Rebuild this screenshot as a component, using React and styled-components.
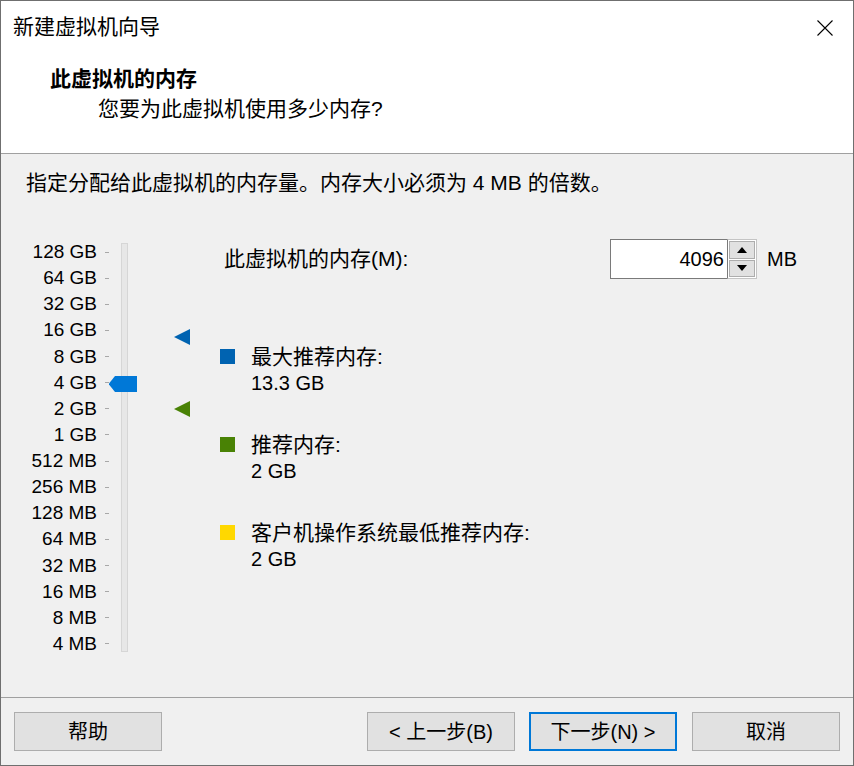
import React from 'react';
import styled, { createGlobalStyle } from 'styled-components';

const GlobalStyle = createGlobalStyle`
  html, body {
    margin: 0;
    padding: 0;
    background: #f0f0f0;
  }
  * { box-sizing: border-box; }
`;

const FONT = `"Liberation Sans", "Noto Sans CJK SC", sans-serif`;

// slider geometry
const ROW_H = 26.125;
const TRACK_TOP = 4;
const SCALE = ['128 GB', '64 GB', '32 GB', '16 GB', '8 GB', '4 GB', '2 GB', '1 GB',
  '512 MB', '256 MB', '128 MB', '64 MB', '32 MB', '16 MB', '8 MB', '4 MB'];

const posOf = gb => ROW_H / 2 + Math.log2(128 / gb) * ROW_H;

const Window = styled.div`
  width: 854px;
  height: 766px;
  border: 1px solid #6f6f6f;
  display: flex;
  flex-direction: column;
  font-family: ${FONT};
  color: #000;
  background: #f0f0f0;
`;

const Header = styled.div`
  height: 153px;
  background: #fff;
  border-bottom: 1px solid #a0a0a0;
  display: flex;
  flex-direction: column;
`;

const TitleRow = styled.div`
  height: 52px;
  display: flex;
  align-items: center;
  justify-content: space-between;
  padding: 0 20px 0 12px;
`;

const Title = styled.div`
  font-size: 21px;
  line-height: 26px;
`;

const CloseButton = styled.div`
  width: 16px;
  height: 16px;
  display: flex;
  margin-top: 1px;
`;

const Heading = styled.div`
  margin-top: 13px;
  padding-left: 49px;
  font-size: 21px;
  font-weight: bold;
  line-height: 26px;
`;

const Subheading = styled.div`
  margin-top: 4px;
  padding-left: 97px;
  font-size: 21px;
  line-height: 26px;
`;

const Body = styled.div`
  flex: 1;
  border-bottom: 1px solid #a0a0a0;
  padding-top: 17px;
`;

const Hint = styled.div`
  padding-left: 25px;
  font-size: 21px;
  line-height: 24px;
`;

const Main = styled.div`
  margin-top: 44px;
  display: flex;
`;

const Scale = styled.div`
  width: 219px;
  height: 418px;
  display: flex;
  flex-shrink: 0;
`;

const Labels = styled.div`
  display: flex;
  flex-direction: column;
`;

const ScaleRow = styled.div`
  height: ${ROW_H}px;
  display: flex;
  align-items: center;
`;

const ScaleLabel = styled.span`
  width: 96px;
  text-align: right;
  font-size: 19px;
  line-height: 22px;
`;

const Tick = styled.span`
  width: 4px;
  height: 1px;
  margin-left: 8px;
  background: #a8a8a8;
`;

const TrackColumn = styled.div`
  position: relative;
  margin-left: 12px;
  margin-top: ${TRACK_TOP}px;
  width: 7px;
  height: 409px;
  background: #e7e7e7;
  border: 1px solid #d6d6d6;
`;

const Thumb = styled.svg`
  position: absolute;
  left: -13px;
  width: 28px;
  height: 16px;
`;

const MarkerColumn = styled.div`
  position: relative;
  margin-left: 46px;
  width: 16px;
`;

const Marker = styled.svg`
  position: absolute;
  left: 0;
  width: 16px;
  height: 16px;
`;

const Details = styled.div`
  flex: 1;
  display: flex;
  flex-direction: column;
`;

const FieldRow = styled.div`
  display: flex;
  align-items: center;
  padding-left: 4px;
  height: 40px;
`;

const FieldLabel = styled.div`
  width: 386px;
  font-size: 21px;
  line-height: 24px;
`;

const SpinBox = styled.div`
  display: flex;
  height: 40px;
`;

const SpinInput = styled.div`
  width: 117px;
  height: 40px;
  border: 1px solid #7a7a7a;
  border-right: none;
  background: #fff;
  display: flex;
  align-items: center;
  justify-content: flex-end;
  padding-right: 3px;
  font-size: 20px;
`;

const Spinner = styled.div`
  width: 30px;
  height: 40px;
  border: 1px solid #c4c4c4;
  border-left: 1px solid #7a7a7a;
  background: #fff;
  display: flex;
  flex-direction: column;
  gap: 1px;
  padding: 1px;
`;

const SpinButton = styled.div`
  flex: 1;
  background: #e1e1e1;
  border: 1px solid #adadad;
  display: flex;
  align-items: center;
  justify-content: center;
`;

const Unit = styled.div`
  margin-left: 10px;
  font-size: 20px;
  line-height: 24px;
`;

const Legend = styled.div`
  margin-top: 64px;
  display: flex;
  flex-direction: column;
  gap: 34px;
`;

const LegendItem = styled.div`
  display: flex;
  gap: 16px;
`;

const Swatch = styled.span`
  width: 15px;
  height: 15px;
  margin-top: 6px;
  background: ${p => p.color};
`;

const LegendText = styled.div`
  display: flex;
  flex-direction: column;
`;

const LegendTitle = styled.div`
  font-size: 21px;
  line-height: 27px;
`;

const LegendValue = styled.div`
  font-size: 20px;
  line-height: 27px;
`;

const Footer = styled.div`
  height: 67px;
  display: flex;
  align-items: center;
  padding: 0 13px;
`;

const Spacer = styled.div`
  flex: 1;
`;

const Button = styled.div`
  width: 148px;
  height: 39px;
  background: #e1e1e1;
  border: ${p => p.primary ? '2px solid #0078d7' : '1px solid #adadad'};
  display: flex;
  align-items: center;
  justify-content: center;
  font-size: 20px;
  line-height: 24px;
  margin-left: ${p => p.gap || 0}px;
`;

const legend = [
  { color: '#0063b1', title: '最大推荐内存:', value: '13.3 GB' },
  { color: '#498205', title: '推荐内存:', value: '2 GB' },
  { color: '#ffd800', title: '客户机操作系统最低推荐内存:', value: '2 GB' }
];

const markers = [
  { color: '#0063b1', gb: 13.3 },
  { color: '#498205', gb: 2 }
];

export default function App() {
  const thumbTop = posOf(4) - TRACK_TOP - 8;

  return (
    <>
      <GlobalStyle />
      <Window>
        <Header>
          <TitleRow>
            <Title>新建虚拟机向导</Title>
            <CloseButton>
              <svg width="16" height="16" viewBox="0 0 16 16">
                <path d="M0.5 0.5 L15.5 15.5 M15.5 0.5 L0.5 15.5" stroke="#000" strokeWidth="1.1" fill="none" />
              </svg>
            </CloseButton>
          </TitleRow>
          <Heading>此虚拟机的内存</Heading>
          <Subheading>您要为此虚拟机使用多少内存?</Subheading>
        </Header>

        <Body>
          <Hint>指定分配给此虚拟机的内存量。内存大小必须为 4 MB 的倍数。</Hint>
          <Main>
            <Scale>
              <Labels>
                { SCALE.map(l => (
                  <ScaleRow key={ l }>
                    <ScaleLabel>{ l }</ScaleLabel>
                    <Tick />
                  </ScaleRow>
                )) }
              </Labels>
              <TrackColumn>
                <Thumb viewBox="0 0 28 16" style={ { top: `${ thumbTop }px` } }>
                  <polygon points="0,7.5 0,8.5 6,16 28,16 28,0 6,0" fill="#0078d7" />
                </Thumb>
              </TrackColumn>
              <MarkerColumn>
                { markers.map(m => (
                  <Marker key={ m.color } viewBox="0 0 16 16" style={ { top: `${ posOf(m.gb) - 8 }px` } }>
                    <polygon points="0,8 16,0 16,16" fill={ m.color } />
                  </Marker>
                )) }
              </MarkerColumn>
            </Scale>

            <Details>
              <FieldRow>
                <FieldLabel>此虚拟机的内存(M):</FieldLabel>
                <SpinBox>
                  <SpinInput>4096</SpinInput>
                  <Spinner>
                    <SpinButton>
                      <svg width="10" height="6" viewBox="0 0 10 6"><polygon points="0,6 10,6 5,0" fill="#000" /></svg>
                    </SpinButton>
                    <SpinButton>
                      <svg width="10" height="6" viewBox="0 0 10 6"><polygon points="0,0 10,0 5,6" fill="#000" /></svg>
                    </SpinButton>
                  </Spinner>
                </SpinBox>
                <Unit>MB</Unit>
              </FieldRow>

              <Legend>
                { legend.map(item => (
                  <LegendItem key={ item.title }>
                    <Swatch color={ item.color } />
                    <LegendText>
                      <LegendTitle>{ item.title }</LegendTitle>
                      <LegendValue>{ item.value }</LegendValue>
                    </LegendText>
                  </LegendItem>
                )) }
              </Legend>
            </Details>
          </Main>
        </Body>

        <Footer>
          <Button>帮助</Button>
          <Spacer />
          <Button>&lt; 上一步(B)</Button>
          <Button primary gap={ 14 }>下一步(N) &gt;</Button>
          <Button gap={ 15 }>取消</Button>
        </Footer>
      </Window>
    </>
  );
}
